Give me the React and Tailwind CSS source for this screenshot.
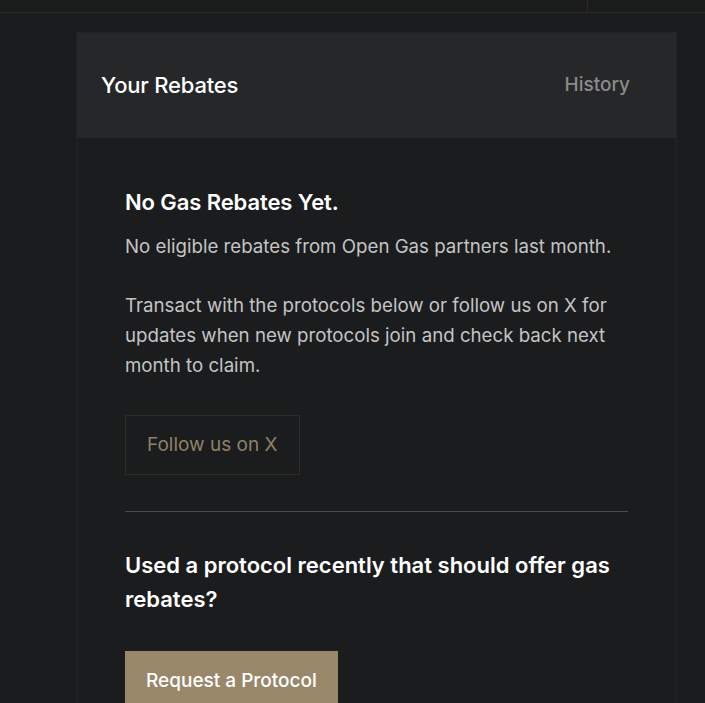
import React from "react";

const App = () => {
    return (
        <div className="min-h-screen w-full bg-[#1a1b1d] font-['Inter',sans-serif] overflow-hidden">
            {/* top bar */}
            <div className="h-[13px] border-b border-[#2d2a24] flex">
                <div className="w-[587px]" />
                <div className="border-l border-[#2d2a24] flex-1" />
            </div>

            {/* card */}
            <div className="ml-[76px] mt-[19px] w-[601px] border border-[#222325] border-b-0">
                <div className="h-[105px] bg-[#262729] flex items-center justify-between pl-[24px] pr-[46px]">
                    <h2 className="text-[22px] font-medium text-white tracking-[-0.2px]">Your Rebates</h2>
                    <button className="text-[19px] font-medium text-[#8b8b8b]">History</button>
                </div>

                <div className="bg-[#1b1c1e] px-[48px] pt-[50px] pb-10">
                    <h3 className="text-[22px] leading-[28px] font-semibold text-white tracking-[-0.1px]">
                        No Gas Rebates Yet.
                    </h3>
                    <p className="mt-[16px] text-[18.7px] leading-[30px] text-[#c4c4c4]">
                        No eligible rebates from Open Gas partners last month.
                    </p>
                    <p className="mt-[29px] text-[18.7px] leading-[30px] text-[#c4c4c4]">
                        Transact with the protocols below or follow us on X for updates when new protocols join and check back next month to claim.
                    </p>

                    <button className="mt-[34px] h-[60px] px-[21px] border border-[#2f2c25] text-[19px] text-[#8f8168]">
                        Follow us on X
                    </button>

                    <div className="mt-[36px] h-px bg-[#4a4a4b]" />

                    <h3 className="mt-[36px] text-[22px] leading-[34px] font-semibold text-white">
                        Used a protocol recently that should offer gas rebates?
                    </h3>

                    <button className="mt-[35px] h-[60px] px-[21px] bg-[#998769] text-[19px] font-medium text-white">
                        Request a Protocol
                    </button>
                </div>
            </div>
        </div>
    );
};

export default App;
